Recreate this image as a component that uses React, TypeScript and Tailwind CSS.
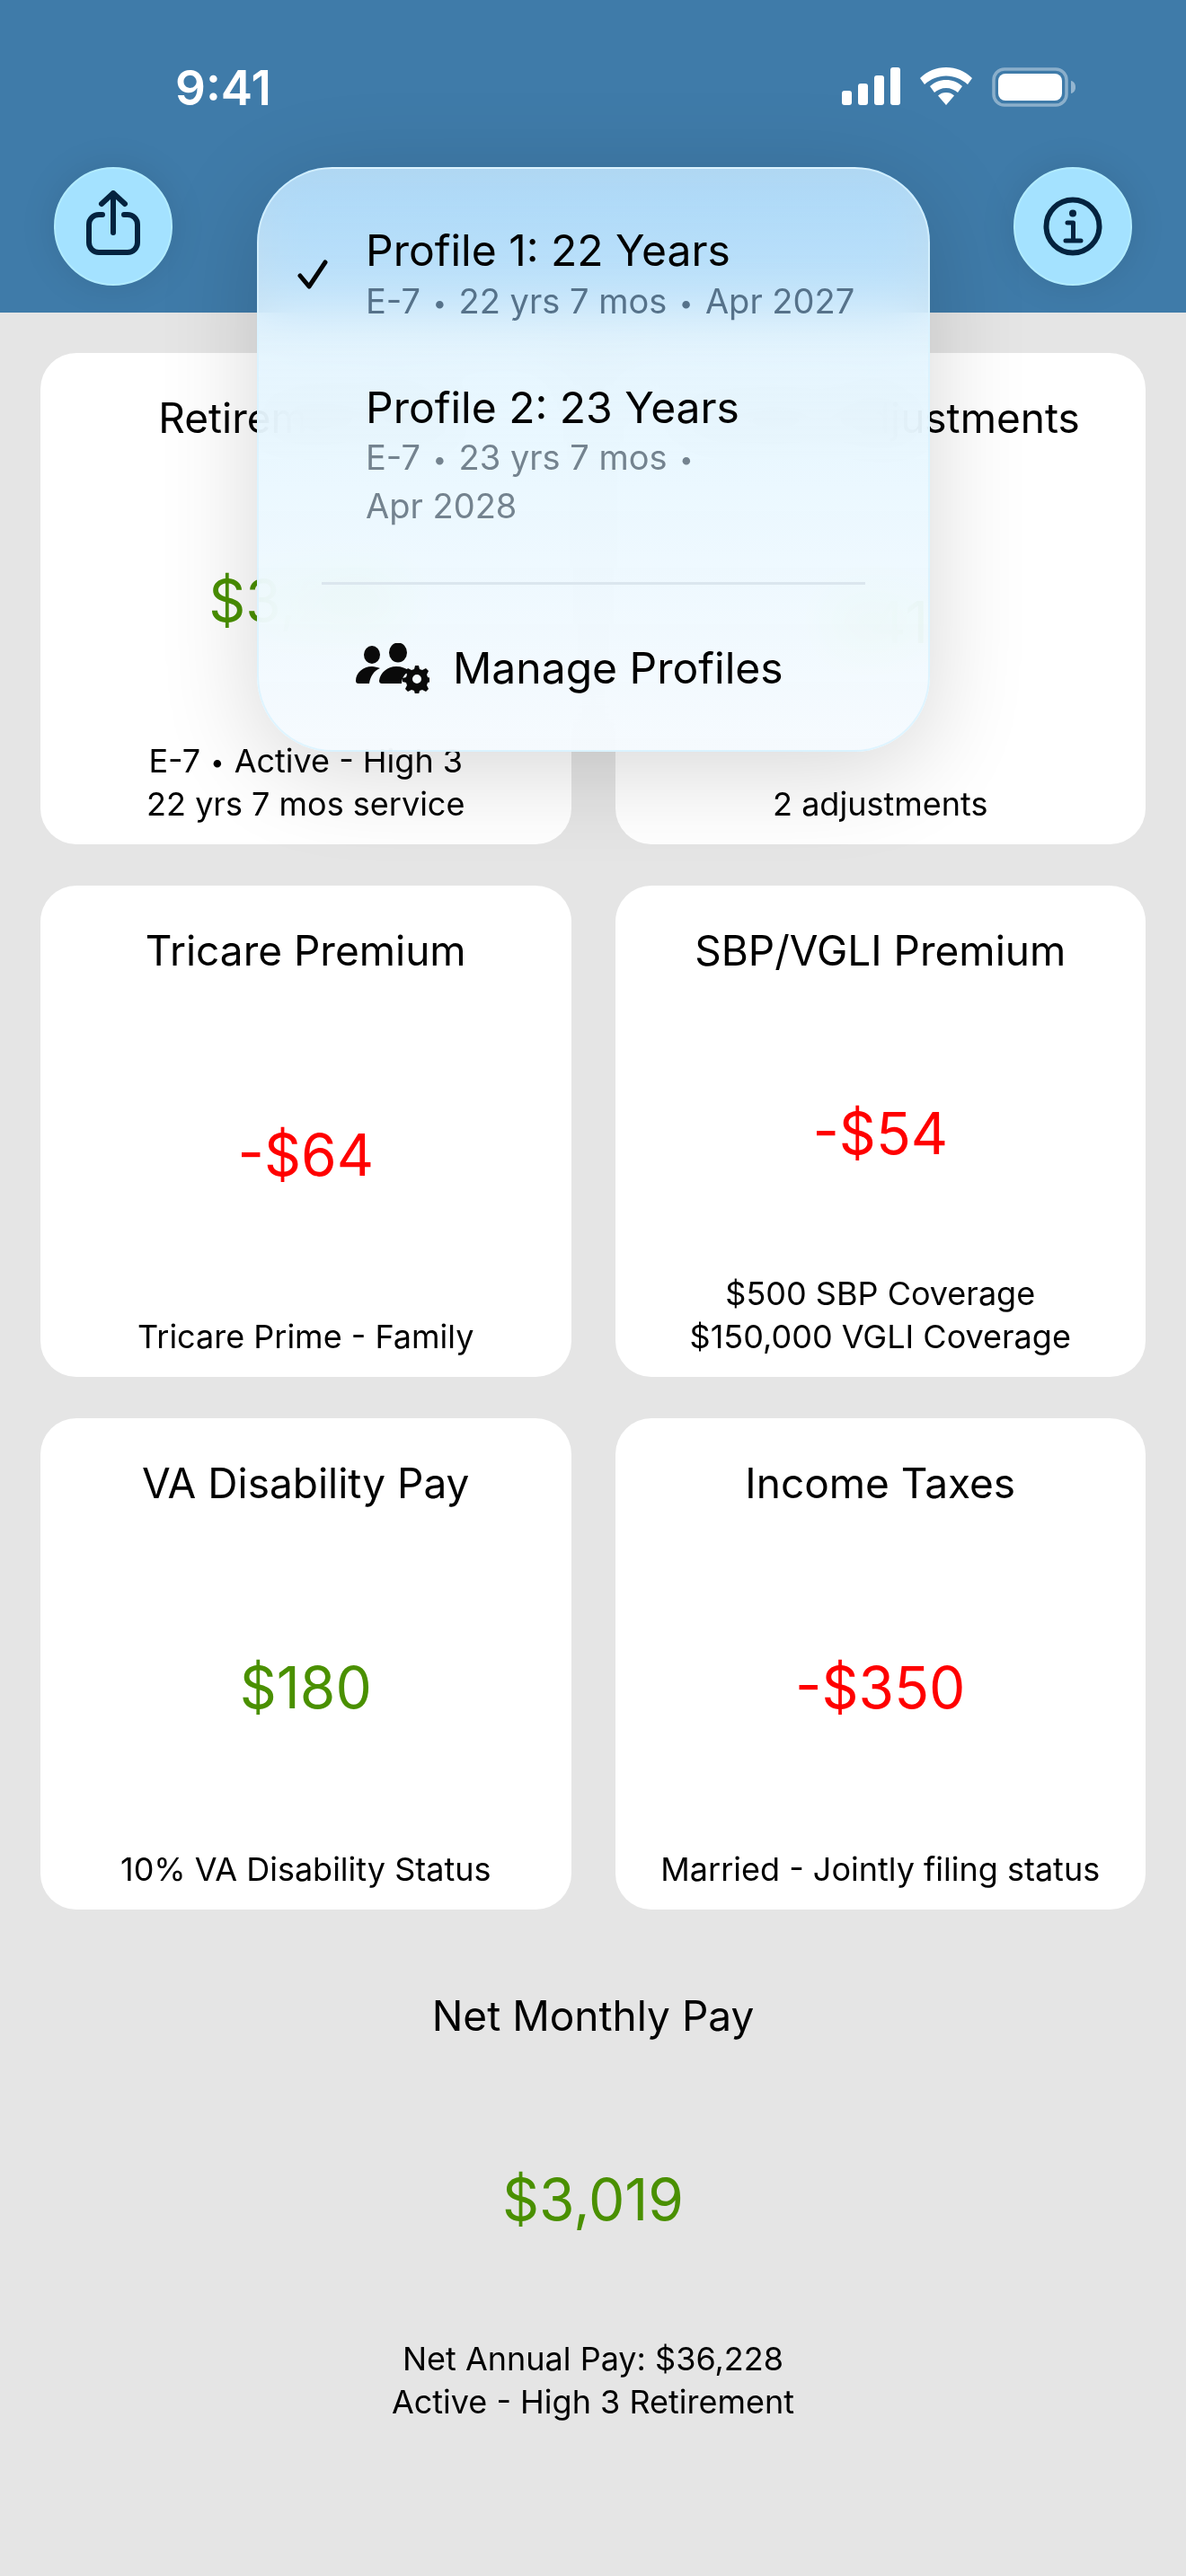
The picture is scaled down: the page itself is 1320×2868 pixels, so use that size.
import React from "react";

const font = { fontFamily: "Inter, 'Noto Sans', sans-serif" };

function Dot() {
  return <span className="mx-[1px] align-[2px] text-[27px] leading-none">•</span>;
}

function SubDot() {
  return <span className="mx-[3px] align-[2px] text-[27px] leading-none">•</span>;
}

function Card({ title, amount, neg, lines }: { title: string; amount: string; neg?: boolean; lines: React.ReactNode[] }) {
  return (
    <div className="flex h-[547px] flex-col items-center rounded-[40px] bg-white px-4 pb-[21px] pt-[41px] text-center text-black">
      <div className="mb-[18px] text-[46px] leading-[62px]">{title}</div>
      <div className="flex flex-1 items-center">
        <div className={`text-[64px] leading-[80px] ${neg ? "text-[#ff0000]" : "text-[#4a9000]"}`}>{amount}</div>
      </div>
      <div className="text-[36px] leading-[48px]">
        {lines.map((l, i) => (
          <div key={i}>{l}</div>
        ))}
      </div>
    </div>
  );
}

function ShareIcon() {
  return (
    <svg width="60" height="74" viewBox="0 0 60 74" fill="none" stroke="#04233f" strokeWidth="6" strokeLinecap="round" strokeLinejoin="round">
      <path d="M18 27h-4a11 11 0 0 0-11 11v20a11 11 0 0 0 11 11h32a11 11 0 0 0 11-11V38a11 11 0 0 0-11-11h-4" />
      <path d="M30 47V4" />
      <path d="M17 15 30 3l13 12" />
    </svg>
  );
}

function InfoIcon() {
  return (
    <svg width="66" height="66" viewBox="0 0 66 66" fill="none" stroke="#04233f" strokeLinecap="round" strokeLinejoin="round">
      <circle cx="33" cy="33" r="29.5" strokeWidth="6" />
      <circle cx="33" cy="18.5" r="4" fill="#04233f" stroke="none" />
      <path d="M27 29h6.5v19M25 49h17" strokeWidth="5" />
    </svg>
  );
}

function ProfilesIcon() {
  return (
    <svg width="82" height="56" viewBox="0 0 82 56" fill="#0a0a0a">
      <ellipse cx="18" cy="13" rx="9" ry="10" />
      <ellipse cx="47" cy="10.500" rx="10" ry="11" />
      <path d="M0 42C0 33 8 26 18 26c3 0 6 1 9 2-7 3-11 9-12 17H3c-2 0-3-1-3-3z" />
      <path d="M26 42c1-9 9-16 19-16 6 0 11 2 15 5-5 2-9 8-9 14H29c-2 0-3-1-3-3z" />
      <path
        transform="translate(1 -2)"
        fillRule="evenodd"
        d="M65 27h4l1 4 3 1 4-2 3 3-2 4 1 3 4 1v4l-4 1-1 3 2 4-3 3-4-2-3 1-1 4h-4l-1-4-3-1-4 2-3-3 2-4-1-3-4-1v-4l4-1 1-3-2-4 3-3 4 2 3-1zM67 37a5 5 0 1 0 0 10 5 5 0 0 0 0-10z"
      />
    </svg>
  );
}

export default function App() {
  return (
    <div className="relative h-[2868px] w-[1320px] overflow-hidden bg-[#e5e5e5]" style={font}>
      <header className="h-[348px] bg-[#3f7ba9]">
        <div className="flex items-start justify-between pl-[195px] pr-[122px] pt-[68px]">
          <div className="text-[53px] font-semibold leading-[60px] text-white">9:41</div>
          <div className="flex items-start gap-[22px] pt-[7px]">
            <svg width="65" height="42" viewBox="0 0 65 42" fill="white">
              <rect x="0" y="26" width="11" height="16" rx="3" />
              <rect x="18" y="18" width="11" height="24" rx="3" />
              <rect x="36" y="9" width="11" height="33" rx="3" />
              <rect x="54" y="0" width="11" height="42" rx="3" />
            </svg>
            <svg width="58" height="42" viewBox="0 0 58 42" fill="white">
              <path d="M29 0c11 0 21 4 29 12l-5 7C46 13 38 9.500 29 9.500S12 13 5 19l-5-7C8 4 18 0 29 0z" />
              <path d="M29 14c7 0 13 2.500 18 7l-5 7c-3.500-3-8-5-13-5s-9.500 2-13 5l-5-7c5-4.500 11-7 18-7z" />
              <path d="M29 28c3.500 0 6.500 1 9 3.500L29 42l-9-10.500C22.500 29 25.500 28 29 28z" />
            </svg>
            <svg width="94" height="44" viewBox="0 0 94 44" fill="none">
              <rect x="2" y="2" width="81" height="40" rx="12" stroke="white" strokeOpacity="0.4" strokeWidth="3.500" />
              <rect x="7" y="7" width="71" height="30" rx="8" fill="white" />
              <path d="M88 15c3 .5 5 3 5 7s-2 6.500-5 7z" fill="white" fillOpacity="0.45" />
            </svg>
          </div>
        </div>
        <div className="mt-[58px] flex justify-between px-[60px]">
          <div className="flex h-[132px] w-[132px] items-center justify-center rounded-full border-2 border-[#b2ecff] bg-[#a4e2ff] pb-[6px] shadow-[0_0_40px_rgba(0,0,0,0.1)]">
            <ShareIcon />
          </div>
          <div className="flex h-[132px] w-[132px] items-center justify-center rounded-full border-2 border-[#b2ecff] bg-[#a4e2ff] shadow-[0_0_40px_rgba(0,0,0,0.1)]">
            <InfoIcon />
          </div>
        </div>
      </header>

      <main className="grid grid-cols-2 gap-x-[49px] gap-y-[46px] pl-[45px] pr-[45px] pt-[45px]">
        <Card title="Retirement Pay" amount="$3,266" lines={[<>E-7 <Dot /> Active - High 3</>, "22 yrs 7 mos service"]} />
        <Card title="Income Adjustments" amount="$41" lines={["2 adjustments"]} />
        <Card title="Tricare Premium" amount="-$64" neg lines={["Tricare Prime - Family"]} />
        <Card title="SBP/VGLI Premium" amount="-$54" neg lines={["$500 SBP Coverage", "$150,000 VGLI Coverage"]} />
        <Card title="VA Disability Pay" amount="$180" lines={["10% VA Disability Status"]} />
        <Card title="Income Taxes" amount="-$350" neg lines={["Married - Jointly filing status"]} />
      </main>

      <section className="flex flex-col items-center pt-[87px] text-center text-black">
        <div className="text-[46px] leading-[62px]">Net Monthly Pay</div>
        <div className="mt-[134px] text-[64px] leading-[80px] text-[#4a9000]">$3,019</div>
        <div className="mt-[113px] text-[36px] leading-[48px]">
          <div>Net Annual Pay: $36,228</div>
          <div>Active - High 3 Retirement</div>
        </div>
      </section>

      <div className="absolute left-[286px] top-[186px] h-[651px] w-[749px] overflow-hidden rounded-[84px] border-2 border-[#d8f2ff]/80 bg-gradient-to-b from-[#d8f0ff]/78 via-[#e8f7ff]/92 to-[#f5fafe]/94 shadow-[0_20px_110px_rgba(0,0,0,0.16)] backdrop-blur-[30px] backdrop-saturate-200">
        <div className="relative pl-[119px] pt-[60px]">
          <svg className="absolute left-[43px] top-[101px]" width="34" height="33" viewBox="0 0 34 33" fill="none" stroke="#050505" strokeWidth="5" strokeLinecap="round" strokeLinejoin="round">
            <path d="M3 18l10 12L31 3" />
          </svg>
          <div className="text-[48px] leading-[62px] text-black">Profile 1: 22 Years</div>
          <div className="text-[38px] leading-[50px] text-[#56728a]">E-7 <SubDot /> 22 yrs 7 mos <SubDot /> Apr 2027</div>
          <div className="mt-[63px] text-[48px] leading-[62px] text-black">Profile 2: 23 Years</div>
          <div className="-mt-[3px] text-[38px] leading-[54px] text-[#74838f]">
            <div>E-7 <SubDot /> 23 yrs 7 mos <SubDot /></div>
            <div>Apr 2028</div>
          </div>
        </div>
        <div className="mx-[70px] mt-[58px] h-[3px] bg-[#dbe6ee]" />
        <div className="flex items-center gap-[26px] pl-[108px] pt-[62px]">
          <ProfilesIcon />
          <div className="text-[48px] leading-[62px] text-black">Manage Profiles</div>
        </div>
      </div>
    </div>
  );
}
